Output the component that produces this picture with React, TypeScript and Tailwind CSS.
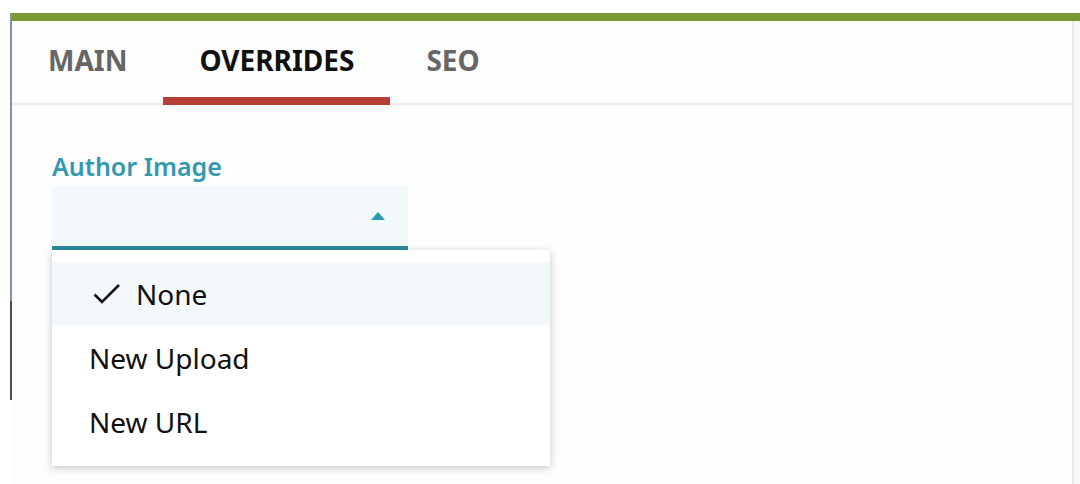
import { useState } from "react";

const tabs = ["MAIN", "OVERRIDES", "SEO"];
const options = ["None", "New Upload", "New URL"];

const App = () => {
  const [active, setActive] = useState("OVERRIDES");
  const [selected, setSelected] = useState("None");

  return (
    <div className="relative h-[484px] w-[1080px] overflow-hidden bg-white font-['Noto_Sans',sans-serif]">
      <div className="mt-[13px] flex">
        {/* left edge of the editor frame */}
        <div className="ml-[10px] flex w-[2px] flex-col">
          <div className="h-[288px] bg-[#7f91a6]" />
          <div className="h-[99px] bg-[#4b4b5b]" />
        </div>

        <div className="flex flex-1 flex-col">
          <div className="h-[8px] bg-[#7b9931]" />
          <div className="flex">
            <div className="h-[463px] flex-1 bg-[#fdfdfd]">
              {/* tabs */}
              <div className="flex border-b-2 border-[#eeeeee]">
                {tabs.map((tab) => (
                  <button
                    key={tab}
                    onClick={() => setActive(tab)}
                    className={
                      active === tab
                        ? "-mb-[2px] flex h-[84px] items-center border-b-8 border-[#b53f35] px-[36px] pt-[2px] text-[28px] font-bold text-[#111111]"
                        : "-mb-[2px] flex h-[84px] items-center border-b-8 border-transparent px-[36px] pt-[2px] text-[28px] font-bold text-[#666666]"
                    }
                  >
                    {tab}
                  </button>
                ))}
              </div>

              {/* author image field */}
              <div className="px-[40px] pt-[44px]">
                <label className="block text-[25px] font-semibold leading-[34px] text-[#3399ae]">
                  Author Image
                </label>
                <div className="relative mt-[3px] w-[356px]">
                  <div className="flex h-[64px] items-center justify-end border-b-4 border-[#2e8a9e] bg-[#f3f9fb] pr-[23px]">
                    <svg width="14" height="8" viewBox="0 0 14 8">
                      <path d="M7 0 L14 8 L0 8 Z" fill="#2e9bb0" />
                    </svg>
                  </div>

                  {/* open menu */}
                  <div className="absolute left-0 top-full z-10 w-[498px] bg-white py-[12px] shadow-[0_2px_8px_rgba(0,0,0,0.22)]">
                    {options.map((opt) => (
                      <div
                        key={opt}
                        onClick={() => setSelected(opt)}
                        className={
                          selected === opt
                            ? "flex h-[64px] items-center bg-[#f3f8fb] pl-[41px] text-[28px] text-[#111111]"
                            : "flex h-[64px] items-center pl-[37px] text-[28px] text-[#111111]"
                        }
                      >
                        {selected === opt && (
                          <svg
                            width="28"
                            height="22"
                            viewBox="0 0 28 22"
                            className="mr-[15px]"
                          >
                            <path
                              d="M1.5 11.5 L9 19 L26 2"
                              fill="none"
                              stroke="#111111"
                              strokeWidth="2.6"
                            />
                          </svg>
                        )}
                        {opt}
                      </div>
                    ))}
                  </div>
                </div>
              </div>
            </div>
            <div className="w-[2px] bg-[#e8e8e8]" />
            <div className="w-[6px] bg-[#f8f8f8]" />
          </div>
        </div>
      </div>
    </div>
  );
};

export default App;
